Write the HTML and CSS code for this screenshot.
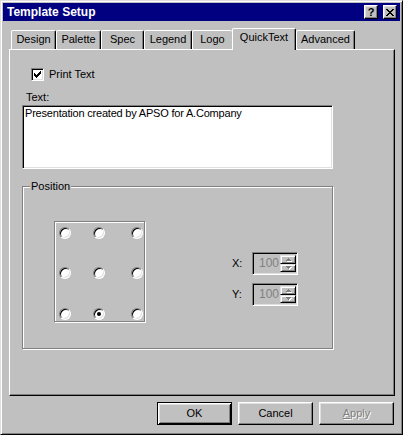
FILE: index.html
```html
<!DOCTYPE html>
<html>
<head>
<meta charset="utf-8">
<link rel="stylesheet" href="styles.css">
</head>
<body>
<div class="window">
  <div class="titlebar">
    <span class="title">Template Setup</span>
    <div class="tbtns">
      <span class="tbtn help">?</span>
      <span class="tbtn close"><svg width="8" height="7" viewBox="0 0 8 7"><path d="M0 0h2v1h-2zM6 0h2v1h-2zM1 1h2v1h-2zM5 1h2v1h-2zM2 2h4v1h-4zM3 3h2v1h-2zM2 4h4v1h-4zM1 5h2v1h-2zM5 5h2v1h-2zM0 6h2v1h-2zM6 6h2v1h-2z" fill="#000"/></svg></span>
    </div>
  </div>
  <div class="tabs">
    <div class="tab t-design">Design</div>
    <div class="tab t-palette">Palette</div>
    <div class="tab t-spec">Spec</div>
    <div class="tab t-legend">Legend</div>
    <div class="tab t-logo">Logo</div>
    <div class="tab active t-quick">QuickText</div>
    <div class="tab t-adv">Advanced</div>
  </div>
  <div class="panel">
    <div class="check-row">
      <span class="checkbox"><svg width="7" height="7" viewBox="0 0 7 7"><path d="M6 0h1v3h-1zM5 1h1v3h-1zM4 2h1v3h-1zM0 2h1v3h-1zM1 3h1v3h-1zM3 3h1v3h-1zM2 4h1v3h-1z" fill="#000"/></svg></span>
      <span>Print Text</span>
    </div>
    <div class="field-label">Text:</div>
    <div class="textbox">Presentation created by APSO for A.Company</div>
    <div class="group">
      <span class="group-label">Position</span>
      <div class="group-body">
        <div class="radiobox">
          <span class="radio"></span><span class="radio"></span><span class="radio"></span>
          <span class="radio"></span><span class="radio"></span><span class="radio"></span>
          <span class="radio"></span><span class="radio checked"></span><span class="radio"></span>
        </div>
        <div class="coords">
          <span class="coord-label">X:</span>
          <div class="spin">
            <span class="spin-value">100</span>
            <div class="spin-btns">
              <span class="spin-btn"><svg width="5" height="3" viewBox="0 0 5 3"><path d="M2 0h1v1h1v1h1v1h-5v-1h1v-1h1z" fill="#808080"/></svg></span>
              <span class="spin-btn"><svg width="5" height="3" viewBox="0 0 5 3"><path d="M0 0h5v1h-1v1h-1v1h-1v-1h-1v-1h-1z" fill="#808080"/></svg></span>
            </div>
          </div>
          <span class="coord-label">Y:</span>
          <div class="spin">
            <span class="spin-value">100</span>
            <div class="spin-btns">
              <span class="spin-btn"><svg width="5" height="3" viewBox="0 0 5 3"><path d="M2 0h1v1h1v1h1v1h-5v-1h1v-1h1z" fill="#808080"/></svg></span>
              <span class="spin-btn"><svg width="5" height="3" viewBox="0 0 5 3"><path d="M0 0h5v1h-1v1h-1v1h-1v-1h-1v-1h-1z" fill="#808080"/></svg></span>
            </div>
          </div>
        </div>
      </div>
    </div>
  </div>
  <div class="buttons">
    <span class="btn default">OK</span>
    <span class="btn">Cancel</span>
    <span class="btn disabled"><u>A</u>pply</span>
  </div>
</div>
</body>
</html>
```

FILE: styles.css
```css
* { box-sizing: border-box; }
html, body { margin: 0; padding: 0; }
body {
  background: #c0c0c0;
  font-family: "Liberation Sans", Arial, sans-serif;
  font-size: 11px;
  line-height: 13px;
  color: #000;
}
.window {
  width: 403px;
  height: 435px;
  background: #c0c0c0;
  border: 1px solid;
  border-color: #dfdfdf #000 #000 #dfdfdf;
  box-shadow: inset 1px 1px #fff, inset -1px -1px #808080;
  padding: 2px;
  display: flex;
  flex-direction: column;
}
.titlebar {
  height: 18px;
  flex: none;
  background: #000080;
  color: #fff;
  display: flex;
  align-items: center;
  justify-content: space-between;
  padding: 0 3px 0 4px;
}
.title { font-weight: bold; font-size: 12px; line-height: 13px; }
.tbtns { display: flex; gap: 5px; }
.tbtn {
  width: 14px;
  height: 14px;
  background: #c0c0c0;
  border: 1px solid;
  border-color: #fff #000 #000 #fff;
  box-shadow: inset -1px -1px #808080, inset 1px 1px #dfdfdf;
  display: flex;
  align-items: center;
  justify-content: center;
  color: #000;
  font-weight: bold;
  font-size: 11px;
  line-height: 11px;
}
.tabs {
  display: flex;
  align-items: flex-end;
  height: 21px;
  margin: 7px 0 0 8px;
  position: relative;
  z-index: 1;
  flex: none;
}
.tab {
  height: 19px;
  border-top: 1px solid #fff;
  border-left: 1px solid #fff;
  border-right: 1px solid #000;
  border-radius: 2px 2px 0 0;
  box-shadow: inset -1px 0 #808080;
  padding-top: 2px;
  text-align: center;
  background: #c0c0c0;
  white-space: nowrap;
}
.tab.active {
  height: 22px;
  margin-bottom: -1px;
}
.t-design { width: 45px; }
.t-palette { width: 45px; }
.t-spec { width: 43px; }
.t-legend { width: 48px; }
.t-logo { width: 40px; border-right: none; box-shadow: none; }
.t-quick { width: 64px; }
.t-adv { width: 59px; }
.panel {
  margin-left: 6px;
  width: 386px;
  height: 347px;
  flex: none;
  border: 1px solid;
  border-color: #fff #000 #000 #fff;
  box-shadow: inset -1px -1px #808080;
  padding-top: 18px;
  display: flex;
  flex-direction: column;
  align-items: flex-start;
}
.check-row {
  display: flex;
  align-items: center;
  height: 13px;
  margin-left: 21px;
}
.checkbox {
  width: 13px;
  height: 13px;
  margin-right: 5px;
  background: #fff;
  border: 1px solid;
  border-color: #808080 #fff #fff #808080;
  box-shadow: inset 1px 1px #000, inset -1px -1px #dfdfdf;
  display: flex;
  align-items: center;
  justify-content: center;
}
.field-label { margin: 10px 0 0 16px; }
.textbox {
  margin: 1px 0 0 12px;
  width: 311px;
  height: 64px;
  background: #fff;
  border: 1px solid;
  border-color: #808080 #fff #fff #808080;
  box-shadow: inset 1px 1px #000, inset -1px -1px #dfdfdf;
  padding: 1px 2px;
  letter-spacing: -0.2px;
}
.group {
  margin: 17px 0 0 12px;
  width: 311px;
  height: 163px;
  border: 1px solid #808080;
  box-shadow: inset 1px 1px #fff, 1px 1px #fff;
  display: flex;
  flex-direction: column;
  align-items: flex-start;
}
.group-label {
  margin: -7px 0 0 7px;
  padding: 0 1px;
  background: #c0c0c0;
}
.group-body {
  display: flex;
  align-items: flex-start;
}
.radiobox {
  margin: 28px 0 0 31px;
  width: 91px;
  height: 101px;
  border: 1px solid #808080;
  box-shadow: inset 1px 1px #fff, 1px 1px #fff;
  padding: 5px 0 0 4px;
  display: grid;
  grid-template-columns: 34px 38px 12px;
  grid-template-rows: 40px 41px 12px;
}
.radio {
  width: 12px;
  height: 12px;
  border-radius: 50%;
  background: #fff;
  border: 1px solid;
  border-color: #808080 #fff #fff #808080;
  box-shadow: inset 1px 1px #000, inset -1px -1px #dfdfdf;
  display: flex;
  align-items: center;
  justify-content: center;
}
.radio.checked::after {
  content: "";
  width: 4px;
  height: 4px;
  border-radius: 50%;
  background: #000;
}
.coords {
  margin: 59px 0 0 87px;
  display: grid;
  grid-template-columns: 20px 46px;
  row-gap: 8px;
  align-items: center;
}
.spin {
  height: 23px;
  border: 1px solid;
  border-color: #808080 #fff #fff #808080;
  box-shadow: inset 1px 1px #000, inset -1px -1px #dfdfdf;
  padding: 2px 1px 2px 2px;
  display: flex;
  align-items: stretch;
}
.spin-value {
  flex: 1;
  text-align: right;
  padding-right: 1px;
  color: #808080;
  font-size: 12px;
  line-height: 17px;
}
.spin-btns {
  width: 16px;
  display: flex;
  flex-direction: column;
}
.spin-btn {
  flex: 1;
  background: #c0c0c0;
  border: 1px solid;
  border-color: #dfdfdf #000 #000 #dfdfdf;
  box-shadow: inset 1px 1px #fff, inset -1px -1px #808080;
  display: flex;
  align-items: center;
  justify-content: center;
}
.spin-btn svg { filter: drop-shadow(1px 1px 0 #fff); }
.buttons {
  display: flex;
  justify-content: flex-end;
  gap: 6px;
  margin-top: 6px;
  padding-right: 6px;
}
.btn {
  width: 75px;
  height: 23px;
  border: 1px solid;
  border-color: #fff #000 #000 #fff;
  box-shadow: inset -1px -1px #808080, inset 1px 1px #dfdfdf;
  display: flex;
  align-items: center;
  justify-content: center;
  background: #c0c0c0;
}
.btn.default {
  border-color: #000;
  box-shadow: inset 1px 1px #fff, inset -1px -1px #000, inset 2px 2px #dfdfdf, inset -2px -2px #808080;
}
.btn.disabled {
  color: #808080;
  text-shadow: 1px 1px 0 #fff;
}
.btn u { text-decoration: underline; }
```
